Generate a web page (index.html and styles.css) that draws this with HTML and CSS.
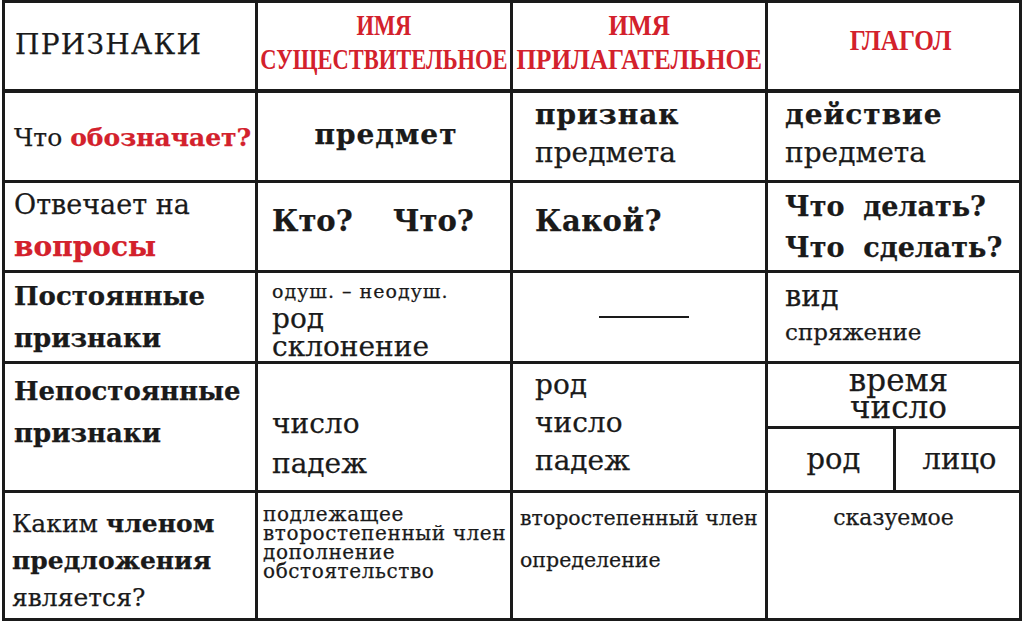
FILE: index.html
```html
<!DOCTYPE html>
<html lang="ru">
<head>
<meta charset="utf-8">
<title>Части речи</title>
<link rel="stylesheet" href="styles.css">
</head>
<body>
<div class="table">
  <div class="cell h h1"><span class="hd">ПРИЗНАКИ</span></div>
  <div class="cell h h2"><span class="red cond">ИМЯ<br>СУЩЕСТВИТЕЛЬНОЕ</span></div>
  <div class="cell h h3"><span class="red cond">ИМЯ<br>ПРИЛАГАТЕЛЬНОЕ</span></div>
  <div class="cell h h4"><span class="red cond">ГЛАГОЛ</span></div>

  <div class="cell c1 r2a">Что <b class="red">обозначает?</b></div>
  <div class="cell c2 r2b"><b>предмет</b></div>
  <div class="cell c3 r2c"><b>признак</b><br>предмета</div>
  <div class="cell c4 r2d"><b>действие</b><br>предмета</div>

  <div class="cell c1 r3a">Отвечает на<br><b class="red">вопросы</b></div>
  <div class="cell c2 r3b"><b>Кто?&nbsp;&nbsp;&nbsp; Что?</b></div>
  <div class="cell c3 r3c"><b>Какой?</b></div>
  <div class="cell c4 r3d"><b>Что&nbsp; делать?<br>Что&nbsp; сделать?</b></div>

  <div class="cell c1 r4a"><b>Постоянные<br>признаки</b></div>
  <div class="cell c2 r4b"><span class="sm">одуш. – неодуш.</span><br>род<br>склонение</div>
  <div class="cell c3 r4c"><span class="dash"></span></div>
  <div class="cell c4 r4d">вид<br><span class="sm2">спряжение</span></div>

  <div class="cell c1 r5a"><b>Непостоянные<br>признаки</b></div>
  <div class="cell c2 r5b">число<br>падеж</div>
  <div class="cell c3 r5c">род<br>число<br>падеж</div>
  <div class="cell split">
    <div class="sp-top">время<br>число</div>
    <div class="sp-bot">
      <div class="sp-a">род</div>
      <div class="sp-b">лицо</div>
    </div>
  </div>

  <div class="cell c1 r6a">Каким <b>членом</b><br><b>предложения</b><br>является?</div>
  <div class="cell c2 r6b">подлежащее<br>второстепенный член<br>дополнение<br>обстоятельство</div>
  <div class="cell c3 r6c">второстепенный член<br><span class="gap">определение</span></div>
  <div class="cell c4 r6d">сказуемое</div>
</div>
</body>
</html>
```

FILE: styles.css
```css
html, body {
  margin: 0;
  padding: 0;
  background: #fff;
}
body {
  width: 1024px;
  height: 623px;
  overflow: hidden;
  font-family: "DejaVu Serif", "Liberation Serif", serif;
  color: #1a1a1a;
}
.table {
  margin: 0 0 0 2px;
  width: 1020px;
  box-sizing: border-box;
  background: #1a1a1a;
  padding: 3px;
  display: grid;
  grid-template-columns: 250px 252px 252px 251px;
  grid-template-rows: 87px 87px 87px 88px 126px 125px;
  gap: 3px;
}
.cell {
  background: #fff;
  box-sizing: border-box;
  font-size: 28px;
  line-height: 1.5;
  white-space: nowrap;
  -webkit-text-stroke: 0.25px currentColor;
}
.h {
  margin-bottom: 1px;
  display: flex;
  align-items: center;
  justify-content: center;
  text-align: center;
}
.h1 {
  justify-content: flex-start;
  padding-left: 10px;
}
.hd {
  font-family: "DejaVu Serif", serif;
  font-size: 28px;
  letter-spacing: 1.3px;
  margin-top: -2px;
}
.red { color: #d3212c; }
.cond {
  font-family: "Liberation Serif", serif;
  font-weight: bold;
  font-size: 30px;
  line-height: 34px;
  display: inline-block;
  transform: scaleX(0.75);
  white-space: nowrap;
  -webkit-text-stroke: 0;
}
.h3 .cond, .h4 .cond { transform: scaleX(0.84); }
.h2 .cond, .h3 .cond { margin-top: -8px; }
.h4 .cond { margin-top: -12px; }
.h4 { padding-left: 14px; }

.c1 { padding-left: 9px; }
.c2 { padding-left: 14px; }
.c3 { padding-left: 22px; }
.c4 { padding-left: 17px; }

.r2a { padding-top: 26px; font-size: 25px; }
.r2b { padding-top: 21px; text-align: center; padding-left: 4px; letter-spacing: 1px; }
.r2c, .r2d { padding-top: 3px; line-height: 38px; }
.r2c b, .r2d b { letter-spacing: 1px; }

.r3a { padding-top: 1px; line-height: 42px; font-size: 27px; }
.r3a b { font-size: 28px; }
.r3b { padding-top: 17px; font-size: 29px; }
.r3c { padding-top: 17px; font-size: 29px; letter-spacing: 0.5px; }
.r3d { padding-top: 3px; font-size: 27px; line-height: 41px; }

.r4a { padding-top: 2px; font-size: 26px; line-height: 42px; }
.r4b { padding-top: 2px; line-height: 28px; }
.sm { font-size: 19px; letter-spacing: 1px; }
.r4c { display: flex; align-items: center; justify-content: center; padding-left: 0; }
.dash { display: block; width: 90px; height: 2px; background: #1a1a1a; margin-left: 10px; }
.r4d { padding-top: 6px; line-height: 34px; font-size: 29px; }
.sm2 { font-size: 23px; }

.r5a { padding-top: 6px; font-size: 26px; line-height: 42px; }
.r5b { padding-top: 40px; line-height: 40px; }
.r5c { padding-top: 2px; line-height: 38px; }

.split {
  display: grid;
  grid-template-rows: 62px 1fr;
  gap: 3px;
  background: #1a1a1a;
}
.sp-top {
  background: #fff;
  text-align: center;
  line-height: 27px;
  padding-top: 3px;
  padding-left: 10px;
  font-size: 31px;
}
.sp-bot {
  display: grid;
  grid-template-columns: 125px 1fr;
  gap: 3px;
}
.sp-a, .sp-b {
  background: #fff;
  display: flex;
  align-items: center;
  justify-content: center;
  font-size: 29px;
}
.sp-a { padding-left: 6px; }
.sp-b { padding-left: 4px; }

.r6a { padding-top: 12px; font-size: 25px; line-height: 37px; padding-left: 7px; }
.r6b { padding-top: 12px; padding-left: 5px; font-size: 20px; letter-spacing: 0.6px; line-height: 19px; }
.r6c { padding-top: 13px; padding-left: 7px; font-size: 20.5px; line-height: 24px; }
.gap { display: inline-block; margin-top: 18px; }
.r6d { padding-top: 13px; text-align: center; font-size: 22px; line-height: 24px; padding-left: 0; }
```
